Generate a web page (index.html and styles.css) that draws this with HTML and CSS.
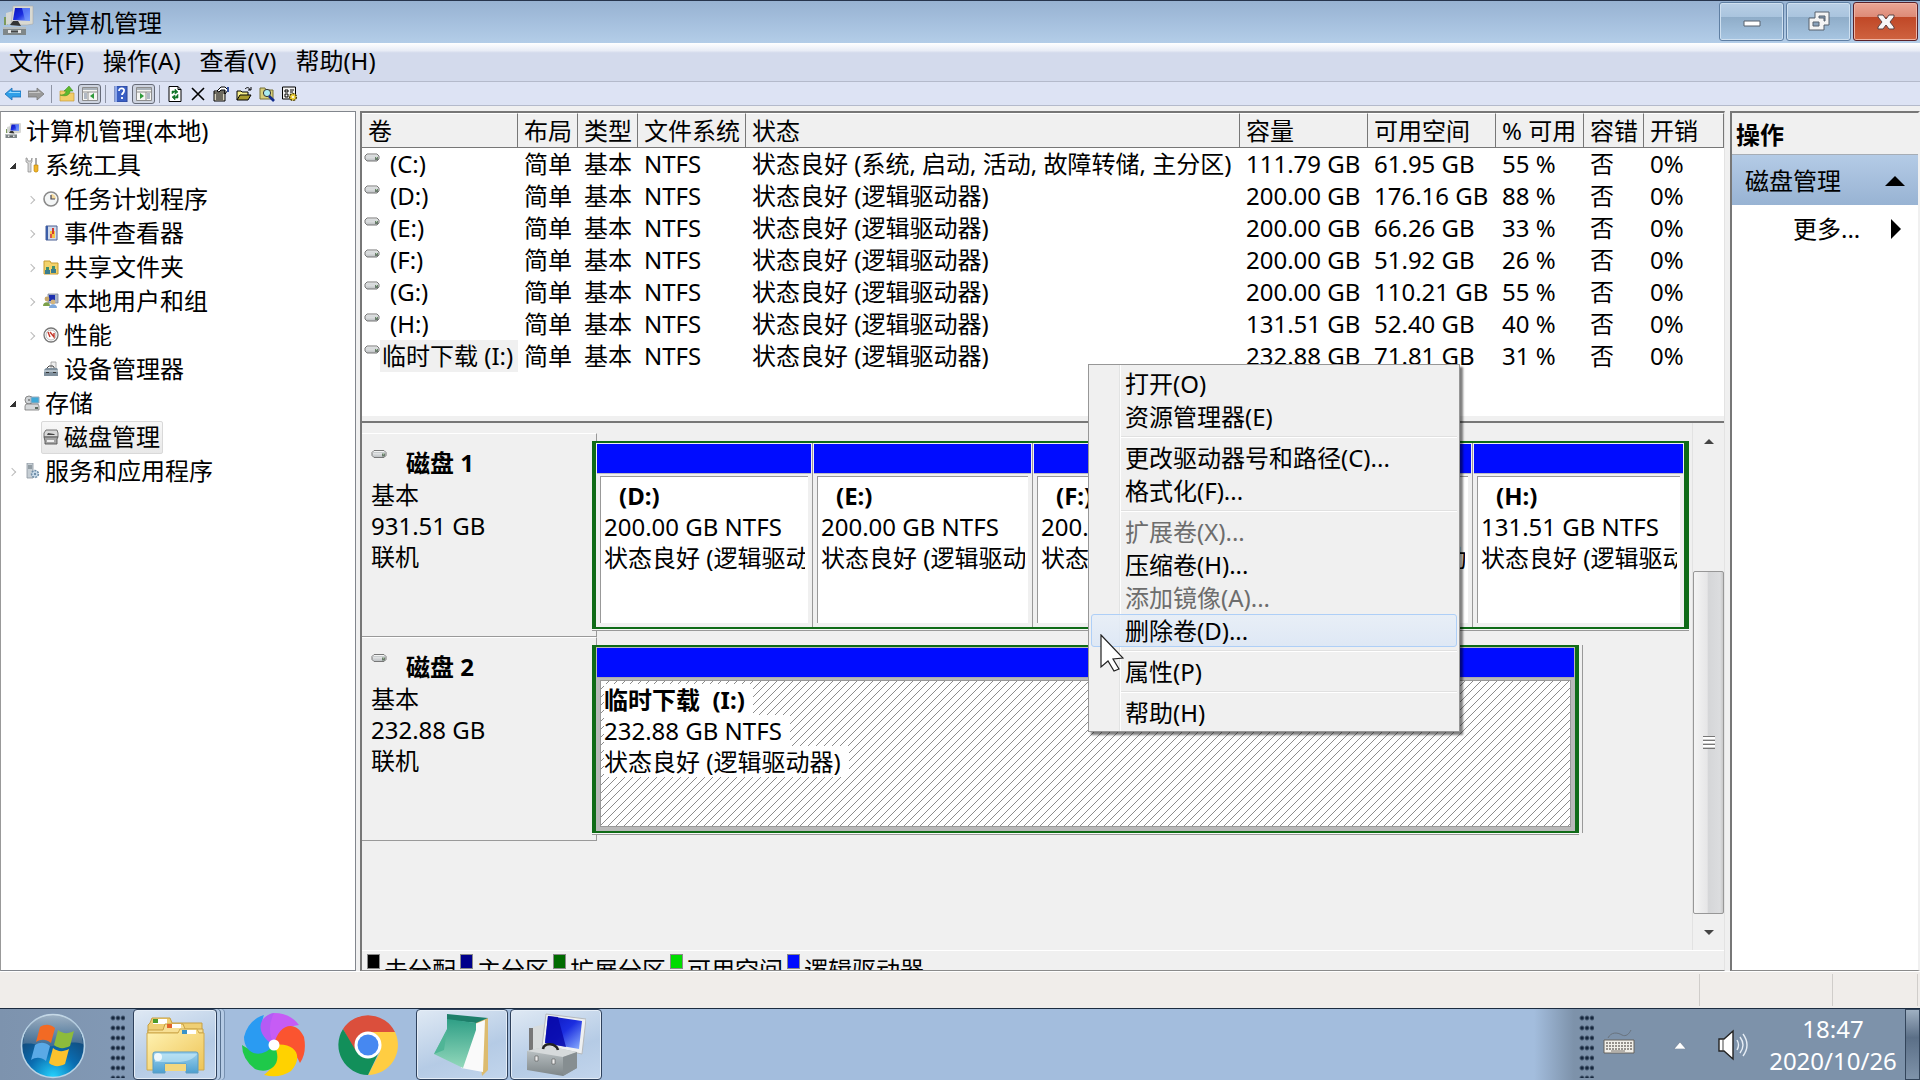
FILE: index.html
```html
<!DOCTYPE html>
<html lang="zh-CN">
<head>
<meta charset="UTF-8">
<meta name="viewport" content="width=device-width, initial-scale=1.0">
<title>计算机管理</title>
<link rel="stylesheet" href="styles.css">
</head>
<body>
  <!-- shared icons -->
  <svg class="defs" aria-hidden="true">
    <defs>
      <linearGradient id="g-screen" x1="0" y1="0" x2="1" y2="1">
        <stop offset="0" stop-color="#0a12b8"/><stop offset=".5" stop-color="#1b2ee0"/><stop offset="1" stop-color="#8fb4ff"/>
      </linearGradient>
      <linearGradient id="g-drive" x1="0" y1="0" x2="0" y2="1">
        <stop offset="0" stop-color="#fdfdfd"/><stop offset="1" stop-color="#b8bcbf"/>
      </linearGradient>
    </defs>
    <symbol id="i-computer" viewBox="0 0 32 32">
      <path d="M2 12h4v8H2z" fill="#7c9a5c"/><path d="M4 8l7-2v12l-7 2z" fill="#d5d8d4"/>
      <path d="M11 1h20v18l-6 1H9z" fill="#d9d9d2" stroke="#aaa" stroke-width=".6"/>
      <path d="M13 3h15v13l-17-1z" fill="url(#g-screen)"/>
      <path d="M20 3h8v13l-5-1z" fill="#6f96ff" opacity=".7"/>
      <path d="M8 20l3-4h5l3 5z" fill="#333"/>
      <path d="M1 22h23v8H1z" fill="#7f8789"/><path d="M1 22h23v2H1z" fill="#b7bdbe"/>
      <path d="M6 25h3v3H6zM16 25h3v3h-3z" fill="#e4e4e4"/><path d="M9 26h7v1H9z" fill="#444"/>
    </symbol>
    <symbol id="i-drive" viewBox="0 0 16 9">
      <path d="M3 1h10l2 2v3l-2 2H3L1 6V3z" fill="url(#g-drive)" stroke="#777" stroke-width="1"/>
      <path d="M2 3h12" stroke="#c9cdcf"/><path d="M11 4h3v3h-3z" fill="#6b7c6d"/><path d="M12 4h1v1h-1z" fill="#b6e0b0"/>
    </symbol>
    <symbol id="i-tools" viewBox="0 0 16 16">
      <path d="M2 1v4l2 1v9h3V6l1-1V1L7 4H4L3 1z" fill="#d8d8d8" stroke="#888" stroke-width=".7"/>
      <path d="M11 1h2v7h-2z" fill="#aaa"/><path d="M10 8h4v6l-1 1h-2l-1-1z" fill="#f0b429" stroke="#b88208" stroke-width=".6"/>
    </symbol>
    <symbol id="i-clock" viewBox="0 0 16 16">
      <circle cx="8" cy="8" r="7" fill="#f4f6f6" stroke="#8a8a8a" stroke-width="1.6"/>
      <path d="M8 3a5 5 0 0 1 5 5H8z" fill="#f5dba0"/><path d="M8 4v4h4" fill="none" stroke="#445" stroke-width="1.2"/>
    </symbol>
    <symbol id="i-event" viewBox="0 0 16 16">
      <path d="M3 1h11v14H3z" fill="#cfd9ea" stroke="#4a5f92"/><path d="M3 1h2v14H3z" fill="#3c5ea8"/>
      <path d="M7 6h5v7H7z" fill="#f6c443"/><path d="M9 3h2v6H9z" fill="#d33a2c"/><path d="M7 9h2v4H7z" fill="#d9534a"/>
    </symbol>
    <symbol id="i-shared" viewBox="0 0 16 16">
      <path d="M1 2h6l1 2h7v11H1z" fill="#f3d36b" stroke="#c79b30"/>
      <path d="M3 8h3v3H3zM9 7h3v3H9z" fill="#3f8f6f"/><path d="M2 11h5v4H2zM8 10h5v4H8z" fill="#3a7d8e"/>
    </symbol>
    <symbol id="i-users" viewBox="0 0 16 16">
      <path d="M5 1h10v9H5z" fill="#a9b6cc" stroke="#7d879b" stroke-width=".8"/><path d="M6 2h6v6H6z" fill="#1c2fb0"/>
      <circle cx="4" cy="6" r="2.4" fill="#c7a76a"/><path d="M0 13c0-5 7-5 7 0z" fill="#7ba04a"/>
      <circle cx="10" cy="9" r="2.4" fill="#d5b57c"/><path d="M6 15c0-5 8-5 8 0z" fill="#7ea8dc"/>
    </symbol>
    <symbol id="i-perf" viewBox="0 0 16 16">
      <circle cx="8" cy="8" r="7" fill="#fff" stroke="#777" stroke-width="1.3"/>
      <circle cx="8" cy="8" r="5" fill="none" stroke="#bbb"/>
      <path d="M5 5l2 5M7 5l4 5V6" fill="none" stroke="#c2372b" stroke-width="1.4"/>
    </symbol>
    <symbol id="i-device" viewBox="0 0 16 16">
      <path d="M8 1h5v7H8z" fill="#eee" stroke="#999" stroke-width=".8"/>
      <path d="M3 8l3-3h4l2 3" fill="none" stroke="#444"/><path d="M1 9l2-2h11l1 2v6H1z" fill="#7f8f9c"/>
      <path d="M1 9h14v2H1z" fill="#b4c0c9"/><path d="M3 11h3v1H3zM10 11h3v1h-3z" fill="#333"/>
    </symbol>
    <symbol id="i-storage" viewBox="0 0 16 16">
      <circle cx="5" cy="5" r="4" fill="#cfd3d6" stroke="#888"/><circle cx="5" cy="5" r="1" fill="#777"/>
      <path d="M7 2h8v6H7z" fill="#3fa9d8" stroke="#9ab"/>
      <path d="M2 9h12l1 2v4H1v-4z" fill="#d5d8da" stroke="#777" stroke-width=".8"/><path d="M11 12h3v2h-3z" fill="#5c6a60"/>
    </symbol>
    <symbol id="i-diskmgmt" viewBox="0 0 16 16">
      <path d="M3 1h11l1 3v4H1V4z" fill="#d8d8d8" stroke="#666" stroke-width=".9"/><path d="M5 4l6 1 1 1H4z" fill="#444"/>
      <path d="M1 8h14l-1 2v5H2v-3z" fill="#a4a4a4" stroke="#555" stroke-width=".9"/><path d="M4 11h7v2H4z" fill="#eee"/>
    </symbol>
    <symbol id="i-services" viewBox="0 0 16 16">
      <path d="M3 0h6v15H3z" fill="#c6ced4" stroke="#8b969e" stroke-width=".8"/><path d="M4 3h4M4 5h4" stroke="#5f6c75"/>
      <circle cx="11" cy="11" r="3.4" fill="#cfe0ee" stroke="#6f8ea8" stroke-width="1.6" stroke-dasharray="2 1"/>
      <circle cx="11" cy="11" r="1.2" fill="#6f8ea8"/>
    </symbol>
    <symbol id="i-panes" viewBox="0 0 16 14">
      <path d="M.5.5h15v13H.5z" fill="#f5f5f2" stroke="#8d8d8d"/><path d="M1 1h14v2H1z" fill="#aab2ba"/>
      <path d="M1 5h14M6 5v8" stroke="#8d8d8d"/><path d="M2 7h3M2 9h3M2 11h3" stroke="#6d7d96"/>
    </symbol>
  </svg>

  <header class="titlebar">
    <svg class="title-icon"><use href="#i-computer"/></svg>
    <h1>计算机管理</h1>
    <div class="window-buttons">
      <button type="button" class="win-btn" aria-label="最小化">
        <svg viewBox="0 0 24 24"><path d="M4 11h16v5H4z" fill="#fff" stroke="#56606c"/></svg>
      </button>
      <button type="button" class="win-btn" aria-label="还原">
        <svg viewBox="0 0 24 24"><path d="M8 2h14v13h-5v5H2V8h6z" fill="#f4f4f4" stroke="#56606c"/><path d="M12 6h6v5h-1V8h-5z" fill="#8aa2bb" stroke="#56606c"/><path d="M6 12h6v4H6z" fill="#8aa2bb" stroke="#56606c"/></svg>
      </button>
      <button type="button" class="win-btn close" aria-label="关闭">
        <svg viewBox="0 0 24 24"><path d="M4 5h5l3 4 3-4h5v2l-4 5 4 5v2h-5l-3-4-3 4H4v-2l4-5-4-5z" fill="#f6f6f6" stroke="#5c4242"/></svg>
      </button>
    </div>
  </header>

  <nav class="menubar">
    <button type="button">文件(F)</button>
    <button type="button">操作(A)</button>
    <button type="button">查看(V)</button>
    <button type="button">帮助(H)</button>
  </nav>

  <div class="toolbar">
    <button type="button" aria-label="后退"><svg viewBox="0 0 16 16"><path d="M0 8l7-6v3h9v6H7v3z" fill="#2f9fe8" stroke="#1c6db5" stroke-width=".8"/><path d="M3 7l3-2v1h9v1z" fill="#9bdcff"/></svg></button>
    <button type="button" aria-label="前进"><svg viewBox="0 0 16 16"><path d="M16 8L9 2v3H0v6h9v3z" fill="#9a9a9a" stroke="#777" stroke-width=".8"/><path d="M13 7l-3-2v1H1v1z" fill="#c8c8c8"/></svg></button>
    <span class="sep"></span>
    <button type="button" aria-label="上一级"><svg viewBox="0 0 16 16"><path d="M1 5h5l1 2h8v8H1z" fill="#f3ce6a" stroke="#c99c36" stroke-width=".7"/><path d="M1 9c5 0 6-2 6-4H5l5-5 4 5h-3c0 4-4 6-10 4z" fill="#5eb92e" stroke="#3b8a18" stroke-width=".5"/></svg></button>
    <button type="button" class="on" aria-label="显示控制台树"><svg viewBox="0 0 16 14"><use href="#i-panes"/><path d="M12 6v6L8 9z" fill="#2f9a3a"/></svg></button>
    <span class="sep"></span>
    <button type="button" aria-label="帮助"><svg viewBox="0 0 16 16"><path d="M2 0h12v16H2z" fill="#3a5fc4" stroke="#2b4796"/><path d="M2 0h2v16H2z" fill="#8fa8e8"/><path d="M6 5c0-4 6-3 5 0 0 2-2 2-2 4M9 11v2" fill="none" stroke="#fff" stroke-width="1.8"/></svg></button>
    <button type="button" class="on" aria-label="显示操作窗格"><svg viewBox="0 0 16 14"><path d="M.5.5h15v13H.5z" fill="#f5f5f2" stroke="#8d8d8d"/><path d="M1 1h14v2H1z" fill="#aab2ba"/><path d="M1 5h14M10 5v8" stroke="#8d8d8d"/><path d="M11 7h3M11 9h3M11 11h3" stroke="#6d7d96"/><path d="M4 6v6l4-3z" fill="#2f9a3a"/></svg></button>
    <span class="sep"></span>
    <button type="button" aria-label="刷新"><svg viewBox="0 0 16 16"><path d="M2 .5h9l3 3v12H2z" fill="#fff" stroke="#000"/><path d="M11 .5v3h3" fill="none" stroke="#000"/><path d="M5 8V5h3V3l3 3-3 2V6M11 8v4H8v2l-3-3 3-2v2" fill="#12752a" stroke="#12752a" stroke-width=".6"/></svg></button>
    <button type="button" aria-label="删除"><svg viewBox="0 0 16 16"><path d="M2 2l12 12M14 2L2 14" stroke="#000" stroke-width="1.6"/></svg></button>
    <button type="button" aria-label="属性"><svg viewBox="0 0 16 16"><path d="M1 5h11v10H1z" fill="#d9d4bf" stroke="#000"/><path d="M1 7h11M3 9h7M3 11h7M3 13h7" stroke="#000"/><path d="M4 5l4-4h4l3 3-3 4V4H8l-2 2z" fill="#fff" stroke="#000"/><path d="M14 1h2v5h-2z" fill="#33509c"/></svg></button>
    <button type="button" aria-label="打开"><svg viewBox="0 0 16 16"><path d="M1 14V5h4l1 1h6v3" fill="#f6ee8a" stroke="#000"/><path d="M1 14l3-5h11l-3 5z" fill="#a89a2c" stroke="#000"/><path d="M9 3c2-2 4-2 5 1M15 1v3h-3" fill="none" stroke="#000"/></svg></button>
    <button type="button" aria-label="查找"><svg viewBox="0 0 16 16"><path d="M1 2h5l1 2h7v9H1z" fill="#d8cf7a" stroke="#777037"/><circle cx="8" cy="7" r="3.6" fill="#a9ecf3" stroke="#333"/><path d="M10 10l5 5" stroke="#122c8c" stroke-width="2.6"/></svg></button>
    <button type="button" aria-label="设置"><svg viewBox="0 0 16 16"><path d="M.5 1h13v12H.5z" fill="#f2f2f2" stroke="#000"/><path d="M3 4h3v2H3zM3 8h3v3H3z" fill="none" stroke="#000"/><path d="M8 4h4M8 6h3" stroke="#000"/><circle cx="11" cy="11" r="3.4" fill="#f0d23c" stroke="#4a3d00" stroke-width="1.4" stroke-dasharray="2 1"/><circle cx="11" cy="11" r="1" fill="#fff"/></svg></button>
  </div>

  <main class="console">
    <nav class="tree">
      <div class="node root"><a href="#"><svg><use href="#i-computer"/></svg>计算机管理(本地)</a></div>
      <ul>
        <li>
          <div class="node"><span class="twist open"></span><a href="#"><svg><use href="#i-tools"/></svg>系统工具</a></div>
          <ul>
            <li class="node"><span class="twist"></span><a href="#"><svg><use href="#i-clock"/></svg>任务计划程序</a></li>
            <li class="node"><span class="twist"></span><a href="#"><svg><use href="#i-event"/></svg>事件查看器</a></li>
            <li class="node"><span class="twist"></span><a href="#"><svg><use href="#i-shared"/></svg>共享文件夹</a></li>
            <li class="node"><span class="twist"></span><a href="#"><svg><use href="#i-users"/></svg>本地用户和组</a></li>
            <li class="node"><span class="twist"></span><a href="#"><svg><use href="#i-perf"/></svg>性能</a></li>
            <li class="node"><span class="twist none"></span><a href="#"><svg><use href="#i-device"/></svg>设备管理器</a></li>
          </ul>
        </li>
        <li>
          <div class="node"><span class="twist open"></span><a href="#"><svg><use href="#i-storage"/></svg>存储</a></div>
          <ul>
            <li class="node"><span class="twist none"></span><a href="#" class="selected"><svg><use href="#i-diskmgmt"/></svg>磁盘管理</a></li>
          </ul>
        </li>
        <li class="node"><span class="twist"></span><a href="#"><svg><use href="#i-services"/></svg>服务和应用程序</a></li>
      </ul>
    </nav>

    <section class="content">
      <div class="volumes">
        <table>
          <colgroup>
            <col class="c-name"><col class="c-short"><col class="c-short"><col class="c-fs"><col>
            <col class="c-size"><col class="c-size"><col class="c-pct"><col class="c-short"><col class="c-last">
          </colgroup>
          <thead>
            <tr><th>卷</th><th>布局</th><th>类型</th><th>文件系统</th><th>状态</th><th>容量</th><th>可用空间</th><th>% 可用</th><th>容错</th><th>开销</th></tr>
          </thead>
          <tbody>
            <tr><td><div class="vol"><svg><use href="#i-drive"/></svg><span>(C:)</span></div></td><td>简单</td><td>基本</td><td>NTFS</td><td>状态良好 (系统, 启动, 活动, 故障转储, 主分区)</td><td>111.79 GB</td><td>61.95 GB</td><td>55 %</td><td>否</td><td>0%</td></tr>
            <tr><td><div class="vol"><svg><use href="#i-drive"/></svg><span>(D:)</span></div></td><td>简单</td><td>基本</td><td>NTFS</td><td>状态良好 (逻辑驱动器)</td><td>200.00 GB</td><td>176.16 GB</td><td>88 %</td><td>否</td><td>0%</td></tr>
            <tr><td><div class="vol"><svg><use href="#i-drive"/></svg><span>(E:)</span></div></td><td>简单</td><td>基本</td><td>NTFS</td><td>状态良好 (逻辑驱动器)</td><td>200.00 GB</td><td>66.26 GB</td><td>33 %</td><td>否</td><td>0%</td></tr>
            <tr><td><div class="vol"><svg><use href="#i-drive"/></svg><span>(F:)</span></div></td><td>简单</td><td>基本</td><td>NTFS</td><td>状态良好 (逻辑驱动器)</td><td>200.00 GB</td><td>51.92 GB</td><td>26 %</td><td>否</td><td>0%</td></tr>
            <tr><td><div class="vol"><svg><use href="#i-drive"/></svg><span>(G:)</span></div></td><td>简单</td><td>基本</td><td>NTFS</td><td>状态良好 (逻辑驱动器)</td><td>200.00 GB</td><td>110.21 GB</td><td>55 %</td><td>否</td><td>0%</td></tr>
            <tr><td><div class="vol"><svg><use href="#i-drive"/></svg><span>(H:)</span></div></td><td>简单</td><td>基本</td><td>NTFS</td><td>状态良好 (逻辑驱动器)</td><td>131.51 GB</td><td>52.40 GB</td><td>40 %</td><td>否</td><td>0%</td></tr>
            <tr><td><div class="vol selected"><svg><use href="#i-drive"/></svg><span>临时下载 (I:)</span></div></td><td>简单</td><td>基本</td><td>NTFS</td><td>状态良好 (逻辑驱动器)</td><td>232.88 GB</td><td>71.81 GB</td><td>31 %</td><td>否</td><td>0%</td></tr>
          </tbody>
        </table>
      </div>

      <div class="graph">
        <div class="disks">
          <div class="disk">
            <div class="disk-label">
              <h2><svg><use href="#i-drive"/></svg>磁盘 1</h2>
              <p>基本</p>
              <p>931.51 GB</p>
              <p>联机</p>
            </div>
            <div class="extent">
              <div class="partitions five">
                <div class="part"><div class="bar"></div><div class="info"><h3>(D:)</h3><p>200.00 GB NTFS</p><p>状态良好 (逻辑驱动器)</p></div></div>
                <div class="part"><div class="bar"></div><div class="info"><h3>(E:)</h3><p>200.00 GB NTFS</p><p>状态良好 (逻辑驱动器)</p></div></div>
                <div class="part"><div class="bar"></div><div class="info"><h3>(F:)</h3><p>200.00 GB NTFS</p><p>状态良好 (逻辑驱动器)</p></div></div>
                <div class="part"><div class="bar"></div><div class="info"><h3>(G:)</h3><p>200.00 GB NTFS</p><p>状态良好 (逻辑驱动器)</p></div></div>
                <div class="part"><div class="bar"></div><div class="info"><h3>(H:)</h3><p>131.51 GB NTFS</p><p>状态良好 (逻辑驱动器)</p></div></div>
              </div>
            </div>
          </div>
          <div class="disk">
            <div class="disk-label">
              <h2><svg><use href="#i-drive"/></svg>磁盘 2</h2>
              <p>基本</p>
              <p>232.88 GB</p>
              <p>联机</p>
            </div>
            <div class="extent">
              <div class="partitions single">
                <div class="part active"><div class="bar"></div><div class="info"><h3>临时下载&nbsp; (I:)</h3><p>232.88 GB NTFS</p><p>状态良好 (逻辑驱动器)</p></div></div>
              </div>
            </div>
          </div>
        </div>
        <div class="scrollbar">
          <button type="button" class="up" aria-label="向上滚动"></button>
          <div class="track"><div class="thumb"><i></i></div></div>
          <button type="button" class="down" aria-label="向下滚动"></button>
        </div>
      </div>

      <div class="legend">
        <span class="unallocated">未分配</span>
        <span class="primary">主分区</span>
        <span class="extended">扩展分区</span>
        <span class="free">可用空间</span>
        <span class="logical">逻辑驱动器</span>
      </div>
    </section>

    <aside class="actions">
      <h2>操作</h2>
      <button type="button" class="group">磁盘管理<svg viewBox="0 0 20 10"><path d="M0 10L10 0l10 10z"/></svg></button>
      <button type="button" class="more">更多...<svg viewBox="0 0 10 20"><path d="M0 0l10 10L0 20z"/></svg></button>
    </aside>
  </main>

  <footer class="statusbar"><span></span><span></span><span></span></footer>

  <div class="taskbar">
    <button type="button" class="start" aria-label="开始">
      <svg viewBox="0 0 66 66">
        <defs>
          <radialGradient id="g-orb" cx=".5" cy="1" r=".9"><stop offset="0" stop-color="#25d4ff"/><stop offset=".45" stop-color="#0a6cb0"/><stop offset="1" stop-color="#153a62"/></radialGradient>
          <linearGradient id="g-gloss" x1="0" y1="0" x2="0" y2="1"><stop offset="0" stop-color="#cfdde8"/><stop offset="1" stop-color="#4a6f92"/></linearGradient>
        </defs>
        <circle cx="33" cy="33" r="31.5" fill="url(#g-orb)" stroke="#b9d3e6" stroke-width="1.6"/>
        <path d="M3 31a30 30 0 0 1 60 0c-16-5-26 4-38 2S9 30 3 31z" fill="url(#g-gloss)" opacity=".75"/>
        <path d="M20 14c5-3 10-3 15 1l-4 15c-5-4-10-4-15-1z" fill="#f26a24"/>
        <path d="M38 17c5 4 10 4 16 1l-4 15c-6 3-11 3-16-1z" fill="#8dbb3c"/>
        <path d="M15 32c5-3 10-3 15 1l-4 15c-5-4-10-4-15-1z" fill="#5aa9e6"/>
        <path d="M33 35c5 4 10 4 16 1l-4 15c-6 3-11 3-16-1z" fill="#fcc22d"/>
      </svg>
    </button>
    <span class="grip"></span>
    <button type="button" class="task stacked" aria-label="资源管理器">
      <svg viewBox="0 0 60 60">
        <defs><linearGradient id="g-folder" x1="0" y1="0" x2="1" y2="1"><stop offset="0" stop-color="#fff3b4"/><stop offset="1" stop-color="#eec456"/></linearGradient>
        <linearGradient id="g-stand" x1="0" y1="0" x2="0" y2="1"><stop offset="0" stop-color="#9ed3ee"/><stop offset="1" stop-color="#4d9fd0"/></linearGradient></defs>
        <path d="M5 8l2-5h18l2 5h30v46H3V10z" fill="#efcf74" stroke="#c79f41"/>
        <path d="M8 4h14v5H8z" fill="#fff"/><path d="M8 4h5v4H8z" fill="#4d9a2a"/>
        <path d="M3 15h15l2-6h18l2 5h18v4H3z" fill="#f7df94" stroke="#c79f41"/><path d="M22 9h14v4H22z" fill="#fff"/><path d="M22 9h5v4h-5z" fill="#e2642a"/>
        <path d="M2 18h31l2-4h17l2 4h5v37H2z" fill="url(#g-folder)" stroke="#cfa94c"/><path d="M37 15h14v4H37z" fill="#fff"/><path d="M37 15h5v4h-5z" fill="#3b93c8"/>
        <path d="M8 39q0-2 2-2h41q2 0 2 2v19H41V49H20v9H8z" fill="url(#g-stand)" stroke="#5b9cc3"/>
        <path d="M20 49h21v7H20z" fill="#f3d77f"/><path d="M10 39h42c-4 6-12 8-20 8H10z" fill="#d6f1fb" opacity=".5"/>
        <circle cx="13" cy="42" r="4" fill="#fff" opacity=".8"/>
      </svg>
    </button>
    <button type="button" class="launch" aria-label="浏览器">
      <svg viewBox="-32 -32 64 64">
        <path d="M0 0C-18-10-18-28 0-32Q16-32 25-20Q6-18 0 0z" fill="#c65cf5"/>
        <path d="M0 0C4-21 22-26 30-8Q33 8 26 18Q18 0 0 0z" fill="#fb5430"/>
        <path d="M0 0C22-3 30 12 17 26Q5 34-10 30Q7 17 0 0z" fill="#ffd200"/>
        <path d="M0 0C10 19-4 30-19 24Q-32 14-32 0Q-15 12 0 0z" fill="#1fc94a"/>
        <path d="M0 0C-14 16-30 8-30-8Q-26-25-10-30Q-18-10 0 0z" fill="#2a9bf2"/>
        <path d="M0 0C-18-10-18-28 0-32Q-8-16 0 0z" fill="#b45bf5"/>
        <circle r="5.5" fill="#fff"/>
      </svg>
    </button>
    <button type="button" class="launch" aria-label="Chrome">
      <svg viewBox="-32 -32 64 64">
        <path d="M-25-16A30 30 0 0 1 27-13H0L-13 7z" fill="#db4f3c"/>
        <path d="M27-13A30 30 0 0 1 0 30L12 7 0-13z" fill="#ffcd42"/>
        <path d="M-25-16A30 30 0 0 0 0 30L11 7-12 6z" fill="#128f5a"/>
        <circle r="13.5" fill="#fff"/><circle r="10.5" fill="#4688f1"/>
      </svg>
    </button>
    <button type="button" class="task" aria-label="记事本">
      <svg viewBox="0 0 60 64">
        <defs><linearGradient id="g-note" x1="0" y1="0" x2="0" y2="1"><stop offset="0" stop-color="#2f9f86"/><stop offset="1" stop-color="#93d8bb"/></linearGradient></defs>
        <path d="M44 9l12-4v52l-6 6z" fill="#dcbb6f"/><path d="M43 11l10-4-2 52-22-4z" fill="#fafafa"/>
        <path d="M15 1l41 4-12 5-29-3z" fill="#1d7f6a"/><path d="M15 6l29 4v7L31 55 2 41l13-25z" fill="url(#g-note)"/>
        <path d="M15 17l-3 20-10 4z" fill="#4fb596"/>
      </svg>
    </button>
    <button type="button" class="task" aria-label="计算机管理">
      <svg viewBox="0 0 60 64">
        <defs><linearGradient id="g-box" x1="0" y1="0" x2="0" y2="1"><stop offset="0" stop-color="#c3cacc"/><stop offset="1" stop-color="#7d8588"/></linearGradient></defs>
        <path d="M3 15h4v23H3z" fill="#777"/><path d="M7 14l12-3v26H7z" fill="#d8dcdd"/>
        <path d="M20 1l40 5-4 35-40-8z" fill="#eef0f1" stroke="#b5b9bc"/><path d="M22 3l34 5-3 28-34-6z" fill="url(#g-screen)"/>
        <path d="M22 3l10 1 8 30-21-4z" fill="#0808a8" opacity=".8"/>
        <path d="M1 38l21-5 29 6v16L37 63 1 57z" fill="url(#g-box)"/><path d="M1 38l21-5 29 6-14 5z" fill="#d6dadb"/>
        <path d="M37 44l14-5v16l-14 8z" fill="#868e91"/>
        <path d="M17 36c1-7 13-6 15 1" fill="none" stroke="#222" stroke-width="2.6"/><path d="M9 43h3v5H9zM26 46h3v5h-3z" fill="#eee" stroke="#555" stroke-width=".6"/>
      </svg>
    </button>

    <div class="tray">
      <span class="grip"></span>
      <svg class="keyboard" viewBox="0 0 32 26"><path d="M5 9c3-6 9-6 14-3 4 2 7-1 9-5" fill="none" stroke="#69737e"/><path d="M1 11h30v13H1z" fill="#f1efe9" stroke="#66625d"/><path d="M3 14h26M3 17h26M3 20h26" stroke="#77736d" stroke-width="1.4" stroke-dasharray="2 1"/><path d="M8 22h14" stroke="#77736d"/></svg>
      <button type="button" class="hidden-icons" aria-label="显示隐藏的图标"><svg viewBox="0 0 14 8"><path d="M1 8l6-7 6 7z" fill="#fff" stroke="#5a6b80" stroke-width=".5"/></svg></button>
      <svg class="speaker" viewBox="0 0 32 32"><path d="M2 10h5l9-8v28l-9-8H2z" fill="#fff" stroke="#222" stroke-width="1.4"/><path d="M6 10v12" stroke="#444"/><path d="M20 11q3 5 0 10M23 8q6 8 0 16M26 5q8 11 0 22" fill="none" stroke="#e6edf5" stroke-width="1.4"/></svg>
      <time class="clock">18:47<br>2020/10/26</time>
      <button type="button" class="show-desktop" aria-label="显示桌面"></button>
    </div>
  </div>

  <menu class="context">
    <li><button type="button">打开(O)</button></li>
    <li><button type="button">资源管理器(E)</button></li>
    <li class="line"></li>
    <li><button type="button">更改驱动器号和路径(C)...</button></li>
    <li><button type="button">格式化(F)...</button></li>
    <li class="line"></li>
    <li><button type="button" disabled>扩展卷(X)...</button></li>
    <li><button type="button">压缩卷(H)...</button></li>
    <li><button type="button" disabled>添加镜像(A)...</button></li>
    <li><button type="button" class="hot">删除卷(D)...</button></li>
    <li class="line"></li>
    <li><button type="button">属性(P)</button></li>
    <li class="line"></li>
    <li><button type="button">帮助(H)</button></li>
  </menu>
  <svg class="cursor" viewBox="0 0 24 38"><path d="M1 1l22 23-10 1 6 10-5 2-6-10-7 6z" fill="#fff" stroke="#222" stroke-width="1.2"/></svg>
</body>
</html>
```
FILE: styles.css
```css
* {
  box-sizing: border-box;
}
body {
  display: flex;
  flex-direction: column;
  height: 100vh;
  margin: 0;
  overflow: hidden;
  background-color: #f0f0f0;
  color: #000;
  font: 24px/32px "Noto Sans", "Noto Sans CJK SC", sans-serif;
  white-space: nowrap;
}
h1, h2, h3, p, ul, menu {
  margin: 0;
  padding: 0;
  font-size: 24px;
}
ul, menu {
  list-style: none;
}
a {
  color: inherit;
  text-decoration: none;
}
button {
  padding: 0;
  border: none;
  background: none;
  color: inherit;
  font: inherit;
}
svg {
  display: block;
  flex: none;
}
.defs {
  position: absolute;
  width: 0;
  height: 0;
}

/* title bar */
.titlebar {
  display: flex;
  height: 43px;
  padding-left: 2px;
  border-top: 1px solid #26344c;
  background: linear-gradient(#97b2d2, #b3cde8);
}
.title-icon {
  width: 32px;
  height: 32px;
  margin-top: 4px;
}
.titlebar h1 {
  flex: 1;
  margin-left: 8px;
  font-weight: normal;
  line-height: 43px;
}
.window-buttons {
  display: flex;
  gap: 2px;
  padding: 1px 2px 2px 0;
}
.win-btn {
  display: flex;
  align-items: center;
  justify-content: center;
  width: 65px;
  border: 1px solid #5f7fa3;
  border-radius: 3px;
  background: linear-gradient(#b9cfe6 0, #a9c4de 38%, #8fadc9 39%, #a8c6e2 100%);
  box-shadow: inset 0 0 0 1px #cfe0f0;
}
.win-btn svg {
  width: 24px;
  height: 24px;
}
.win-btn.close {
  border-color: #5b2128;
  background: linear-gradient(#eaa695 0, #dd8a76 38%, #c04827 39%, #cf6340 100%);
  box-shadow: inset 0 0 0 1px #eeb5a5;
}

/* menu bar and tool bar */
.menubar {
  display: flex;
  gap: 19px;
  height: 39px;
  padding: 0 9px 2px;
  border-bottom: 1px solid #b4bacb;
  background: linear-gradient(#fff 0, #e8ecf6 20%, #d3daec 26%, #d3daec 100%);
}
.toolbar {
  display: flex;
  align-items: center;
  height: 24px;
  padding-left: 1px;
  border-bottom: 1px solid #b4bacb;
  background-color: #dde3f4;
}
.toolbar button {
  display: flex;
  align-items: center;
  justify-content: center;
  width: 23px;
  height: 20px;
}
.toolbar button svg {
  width: 16px;
  height: 16px;
}
.toolbar .on {
  border: 1px solid #666b78;
  border-radius: 3px;
  background-color: #cdd3df;
}
.toolbar .sep {
  width: 1px;
  height: 18px;
  margin: 0 3px 0 4px;
  background-color: #8e94a4;
}

.console {
  display: grid;
  grid-template-columns: 356px 1fr 190px;
  gap: 4px;
  flex: 1;
  min-height: 0;
  padding-top: 5px;
}

/* tree */
.tree {
  padding-top: 2px;
  border: 1px solid #82868d;
  border-left-color: #999;
  background-color: #fff;
}
.tree li > ul {
  padding-left: 19px;
}
.tree .node {
  display: flex;
  height: 34px;
  align-items: center;
  padding-left: 4px;
}
.tree .root {
  padding-left: 2px;
}
.tree a {
  display: flex;
  align-items: center;
  gap: 5px;
  height: 33px;
  padding: 0 2px 0 1px;
  border: 1px solid transparent;
}
.tree a svg {
  width: 16px;
  height: 16px;
}
.tree a.selected {
  border-color: #d9d9d9;
  border-radius: 2px;
  background: linear-gradient(#f8f8f8, #e8e8e8);
}
.twist {
  width: 17px;
  height: 7px;
}
.twist::before {
  display: block;
  width: 5px;
  height: 5px;
  margin: 1px 0 0 4px;
  border: 1px solid #bbb;
  border-width: 1px 1px 0 0;
  transform: rotate(45deg);
  content: "";
}
.twist.open::before {
  width: 6px;
  height: 6px;
  margin-left: 5px;
  border: none;
  background: linear-gradient(135deg, transparent 50%, #333 50%);
  transform: none;
}
.twist.none::before {
  display: none;
}

/* volume list */
.content {
  display: flex;
  flex-direction: column;
  min-width: 0;
  min-height: 0;
  margin-right: 1px;
  border: 1px solid #8b8b8b;
  border-width: 2px 1px 1px 2px;
  border-color: #777 #e3e3e3 #8b8b8b #777;
}
.volumes {
  padding-bottom: 44px;
  background-color: #fff;
}
table {
  width: 100%;
  border-collapse: separate;
  border-spacing: 0;
  table-layout: fixed;
}
.c-name { width: 156px; }
.c-short { width: 60px; }
.c-fs { width: 108px; }
.c-size { width: 128px; }
.c-pct { width: 88px; }
.c-last { width: 80px; }
th {
  height: 34px;
  padding: 1px 0 0 6px;
  border: 1px solid #fff;
  border-right-color: #777;
  border-bottom: 1px solid #777;
  border-left: none;
  background-color: #f0f0f0;
  font-weight: normal;
  text-align: left;
}
td {
  height: 32px;
  padding: 0 0 0 6px;
}
td:first-child {
  padding: 0;
}
.vol {
  display: flex;
  padding-left: 2px;
}
.vol svg {
  width: 16px;
  height: 9px;
  margin-top: 5px;
}
.vol span {
  flex: 1;
  padding-left: 10px;
}
.vol.selected span {
  padding-left: 2px;
  background-color: #f0f0f0;
}

/* graphical view */
.graph {
  display: flex;
  flex: 1;
  min-height: 0;
  margin-top: 5px;
  border-top: 2px solid #777;
}
.disks {
  flex: 1;
  min-width: 0;
  padding-top: 10px;
}
.disk {
  display: flex;
  height: 204px;
}
.disk-label {
  width: 235px;
  padding: 12px 0 0 9px;
  border: 1px solid #999;
  border-width: 1px 1px 1px 0;
  border-top-color: #fff;
}
.disk-label p, .info p {
  line-height: 31px;
}
.disk-label h2 {
  display: flex;
  gap: 19px;
  line-height: 33px;
}
.disk-label svg {
  width: 16px;
  height: 10px;
  margin-top: 3px;
}
.extent {
  flex: 1;
  min-width: 0;
  margin: 8px 3px 8px -5px;
}
.partitions {
  display: grid;
  height: 188px;
  border: solid #0f6b17;
  border-width: 2px 5px 2px 4px;
  box-shadow: 0 1px #f8f8f8, 0 2px #999;
}
.five {
  grid-template-columns: 217fr 220fr 220fr 220fr 211fr;
}
.single {
  width: 90%;
  border-right-width: 4px;
  box-shadow: 0 1px #f8f8f8, 0 2px #999, 3px 0 #f0f0f0, 4px 0 #999;
}
.part {
  display: flex;
  flex-direction: column;
  min-width: 0;
  padding: 1px 1px 0;
  border-right: 1px solid #999;
  background-color: #f0f0f0;
}
.part:last-child {
  border-right: none;
}
.bar {
  height: 30px;
  border-bottom: 1px solid #bcbcc4;
  background-color: #000cff;
}
.info {
  flex: 1;
  overflow: hidden;
  margin: 2px 3px 4px;
  padding: 3px 3px 0;
  border: 1px solid #999;
  border-width: 1px 0 0 1px;
  background-color: #fff;
}
.info h3, .info p {
  overflow: hidden;
}
.info h3 {
  padding-left: 15px;
  line-height: 31px;
}
.active .bar {
  border-bottom-color: #aaa;
}
.active {
  background-color: #b9b9b9;
}
.active .info {
  border-width: 1px;
  background: linear-gradient(135deg, transparent 45%, #8c8c8c 45% 54%, transparent 54%) 0 0 / 8px 8px #fff;
}
.active .info h3, .active .info p {
  width: max-content;
  padding: 0 8px 0 0;
  background-color: #fff;
}

.scrollbar {
  display: flex;
  flex-direction: column;
  width: 32px;
  border-left: 1px solid #e2e2e2;
}
.scrollbar button {
  height: 36px;
}
.scrollbar button::before {
  display: block;
  width: 0;
  margin: auto;
  border: solid transparent;
  border-width: 0 5px 5px;
  border-bottom-color: #444;
  content: "";
}
.scrollbar .down::before {
  border-width: 5px 5px 0;
  border-top-color: #444;
}
.track {
  display: grid;
  grid-template-rows: 112fr 342fr;
  flex: 1;
}
.thumb {
  display: flex;
  align-items: center;
  justify-content: center;
  grid-row: 2;
  border: 1px solid #979797;
  border-radius: 2px;
  background: linear-gradient(90deg, #f4f4f4 0, #e6e6e7 45%, #d5d6d8 50%, #dcdddf 90%, #c8c8c8 100%);
}
.thumb i {
  width: 12px;
  height: 13px;
  background: repeating-linear-gradient(#777 0 1px, #fff 1px 3px, #ccc 3px 4px);
}

.legend {
  display: flex;
  gap: 4px;
  height: 20px;
  overflow: hidden;
  padding: 3px 0 0 5px;
  border-top: 1px solid #fff;
}
.legend span {
  display: flex;
  gap: 4px;
}
.legend span::before {
  width: 11px;
  height: 13px;
  border: 1px solid #8a8a8a;
  background-color: var(--swatch);
  content: "";
}
.unallocated { --swatch: #000; }
.primary { --swatch: #00008b; }
.extended { --swatch: #006b00; }
.free { --swatch: #00dc00; }
.logical { --swatch: #000cff; }

/* actions pane */
.actions {
  display: flex;
  flex-direction: column;
  border: 1px solid #e3e3e3;
  border-width: 2px 2px 1px 2px;
  border-color: #777 #f0f0f0 #8b8b8b #777;
  background-color: #fff;
}
.actions h2 {
  height: 42px;
  padding-left: 4px;
  border-bottom: 1px solid #a6adb5;
  background-color: #f0f0f0;
  line-height: 44px;
}
.actions button {
  display: flex;
  align-items: center;
  height: 50px;
}
.actions .group {
  justify-content: space-between;
  padding: 2px 13px 0;
  background: linear-gradient(#b4cbe6, #98b3d3);
}
.actions .group svg {
  width: 20px;
  height: 10px;
}
.actions .more {
  justify-content: space-between;
  padding: 0 17px 2px 61px;
}
.actions .more svg {
  width: 10px;
  height: 20px;
}

.statusbar {
  display: flex;
  justify-content: flex-end;
  height: 37px;
  padding: 2px 0;
  border-top: 1px solid #fff;
  background-color: #f0edea;
}
.statusbar span {
  border-left: 1px solid #d0cdca;
}
.statusbar span:nth-child(1) { width: 133px; }
.statusbar span:nth-child(2) { width: 85px; }
.statusbar span:nth-child(3) { width: 3px; }

/* task bar */
.taskbar {
  display: flex;
  height: 72px;
  border-top: 1px solid #1c2c40;
  background: linear-gradient(90deg, #7d93ae 0, #8299b5 130px, #a3bddd 215px);
}
.start {
  margin: 3px 0 0 20px;
}
.start svg {
  width: 66px;
  height: 66px;
}
.grip {
  width: 15px;
  margin: 6px 0 2px;
  background: radial-gradient(circle at 3px 3px, #16273d 1px, transparent 3px) 0 0 / 5px 10px;
}
.start + .grip {
  margin-right: 1px;
  margin-left: 24px;
}
.task {
  display: flex;
  align-items: center;
  justify-content: center;
  width: 92px;
  margin-right: 2px;
  border: 1px solid #2e415c;
  border-radius: 4px;
  background: linear-gradient(160deg, #dfe9f4, #b5cbe5 60%, #c2d5ec);
  box-shadow: inset 0 0 0 1px #e4edf7;
}
.task svg {
  width: 60px;
  height: 64px;
}
.task.stacked {
  width: 84px;
  margin: 0 11px 0 7px;
  box-shadow: inset 0 0 0 1px #e4edf7, 3px 0 #b5cbe5, 4px 0 #56708f, 7px 0 #b5cbe5, 8px 0 #7791b1;
}
.launch {
  width: 92px;
  margin-right: 2px;
}
.launch svg {
  width: 64px;
  height: 64px;
  margin: auto;
}
.tray {
  display: flex;
  align-items: center;
  margin-left: auto;
  padding-left: 45px;
  background: linear-gradient(90deg, #a3bddd 0, #7d92aa 40px);
  color: #fff;
}
.tray .grip {
  align-self: stretch;
}
.keyboard {
  width: 32px;
  height: 26px;
  margin: 0 38px 6px 9px;
}
.hidden-icons svg {
  width: 14px;
  height: 8px;
}
.speaker {
  width: 32px;
  height: 32px;
  margin: 0 17px 0 30px;
}
.clock {
  min-width: 134px;
  text-align: center;
}
.show-desktop {
  align-self: stretch;
  width: 15px;
  margin-left: 5px;
  border: 1px solid #33455b;
  background: linear-gradient(#9fb0c2, #5b6f87 40%, #7f93aa);
}

/* context menu, floats over the console */
.context {
  position: absolute;
  top: 364px;
  left: 1088px;
  width: 372px;
  padding: 2px;
  border: 1px solid #979797;
  background: linear-gradient(90deg, transparent 30px, #e2e3e3 30px 31px, #fff 31px 32px, transparent 32px) #f0f0f0;
  box-shadow: 3px 3px 2px rgba(0,0,0,0.5);
}
.context li button {
  display: block;
  width: 100%;
  height: 33px;
  padding-left: 33px;
  border: 1px solid transparent;
  border-radius: 3px;
  line-height: 31px;
  text-align: left;
}
.context .hot {
  border-color: #aecff7;
  background: linear-gradient(rgba(230,238,248,0.8), rgba(218,230,246,0.8));
}
.context button:disabled {
  color: #6d6d6d;
}
.context .line {
  height: 2px;
  margin: 3px 0 3px 30px;
  border-top: 1px solid #e0e0e0;
  border-bottom: 1px solid #fff;
}
.cursor {
  position: absolute;
  top: 634px;
  left: 1100px;
  width: 24px;
  height: 38px;
}
```
